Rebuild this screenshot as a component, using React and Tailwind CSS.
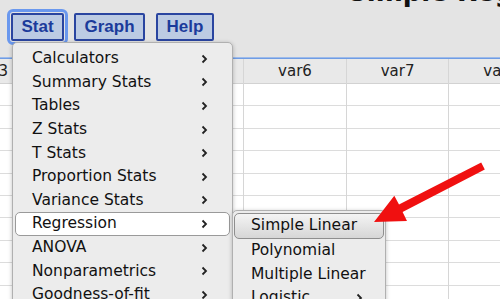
import React from "react";

const menuItems = [
  "Calculators",
  "Summary Stats",
  "Tables",
  "Z Stats",
  "T Stats",
  "Proportion Stats",
  "Variance Stats",
  "Regression",
  "ANOVA",
  "Nonparametrics",
  "Goodness-of-fit",
  "Control Charts",
];

const cols = ["var3", "var4", "var5", "var6", "var7", "var8"];

function Chevron() {
  return (
    <svg width="7" height="10" viewBox="0 0 7 10" className="shrink-0">
      <polyline points="1.5,1.5 5,5 1.5,8.5" fill="none" stroke="#222" strokeWidth="1.8" />
    </svg>
  );
}

export default function App() {
  return (
    <div className="relative w-[500px] h-[299px] overflow-hidden bg-white font-['DejaVu_Sans',sans-serif] text-[#111]">
      {/* top bar */}
      <div className="h-[57px] bg-[#e4e4e4] flex items-start pl-[11px] pt-[13px] overflow-hidden">
        <button className="shrink-0 h-[28px] w-[53px] bg-[#bccbe3] border-2 border-[#2a45a0] rounded-[2px] outline-[3px] outline-offset-[1px] outline-[#6a98ee] outline-solid text-[#1b3b9b] font-bold text-[17px] font-['Liberation_Sans',sans-serif] flex items-center justify-center">
          Stat
        </button>
        <button className="shrink-0 ml-[10px] h-[28px] w-[71px] bg-[#bccbe3] border-2 border-[#2a45a0] rounded-[2px] text-[#1b3b9b] font-bold text-[17px] font-['Liberation_Sans',sans-serif] flex items-center justify-center">
          Graph
        </button>
        <button className="shrink-0 ml-[11px] h-[28px] w-[58px] bg-[#bccbe3] border-2 border-[#2a45a0] rounded-[2px] text-[#1b3b9b] font-bold text-[17px] font-['Liberation_Sans',sans-serif] flex items-center justify-center">
          Help
        </button>
        <div className="ml-[134px] mt-[-38px] shrink-0 whitespace-nowrap font-bold text-[26px] leading-[34px] text-[#111]">
          Simple Regression
        </div>
      </div>
      <div className="h-[1px] bg-[#9dbbea]" />
      <div className="h-[1px] bg-[#6f9ce4]" />

      {/* table */}
      <div className="ml-[-63.6px] flex">
        {cols.map((c, idx) => (
          <div key={c} className="w-[102.6px] shrink-0 border-r border-[#d6d6d6]">
            <div
              className={
                "h-[25px] bg-[#e9e9e9] border-b border-[#d2d2d2] flex items-center justify-center text-[15px] text-[#222] " +
                (idx === 0 ? "pl-[8px]" : "")
              }
            >
              {c}
            </div>
            {Array.from({ length: 10 }).map((_, i) => (
              <div key={i} className="h-[22.4px] border-b border-[#dcdcdc] bg-white" />
            ))}
          </div>
        ))}
      </div>

      {/* Stat menu */}
      <div className="absolute left-[12px] top-[42px] w-[221px] h-[300px] bg-[#ececec] border border-[#b0b0b0] rounded-[5px] shadow-[0_1px_4px_rgba(0,0,0,0.25)] pt-[4px] px-[2px] flex flex-col">
        {menuItems.map((m) => (
          <div
            key={m}
            className={
              "h-[23.6px] shrink-0 flex items-center justify-between pl-[16px] pr-[21px] text-[15.5px] rounded-[5px] " +
              (m === "Regression" ? "bg-white border border-[#9a9a9a]" : "border border-transparent")
            }
          >
            <span>{m}</span>
            <Chevron />
          </div>
        ))}
      </div>

      {/* Regression submenu */}
      <div className="absolute left-[232px] top-[210px] w-[154px] h-[100px] bg-[#ececec] border border-[#b0b0b0] rounded-[5px] shadow-[0_1px_4px_rgba(0,0,0,0.25)] pt-[2px] px-[1px] flex flex-col">
        <div className="h-[26px] shrink-0 flex items-center pl-[16px] text-[15.5px] rounded-[5px] border border-[#8e8e8e] bg-gradient-to-b from-[#f4f4f4] to-[#d6d6d6]">
          Simple Linear
        </div>
        <div className="h-[23.6px] shrink-0 flex items-center pl-[17px] text-[15.5px]">Polynomial</div>
        <div className="h-[23.6px] shrink-0 flex items-center pl-[17px] text-[15.5px]">Multiple Linear</div>
        <div className="h-[23.6px] shrink-0 flex items-center justify-between pl-[17px] pr-[21px] text-[15.5px]">
          <span>Logistic</span>
          <Chevron />
        </div>
      </div>

      {/* red arrow */}
      <svg className="absolute left-0 top-0 pointer-events-none" width="500" height="299" viewBox="0 0 500 299">
        <polygon
          points="374,222 394.3,195.8 399,204.6 481.2,162.4 484.8,169.6 402.6,211.9 407,221"
          fill="#f01010"
        />
      </svg>
    </div>
  );
}
